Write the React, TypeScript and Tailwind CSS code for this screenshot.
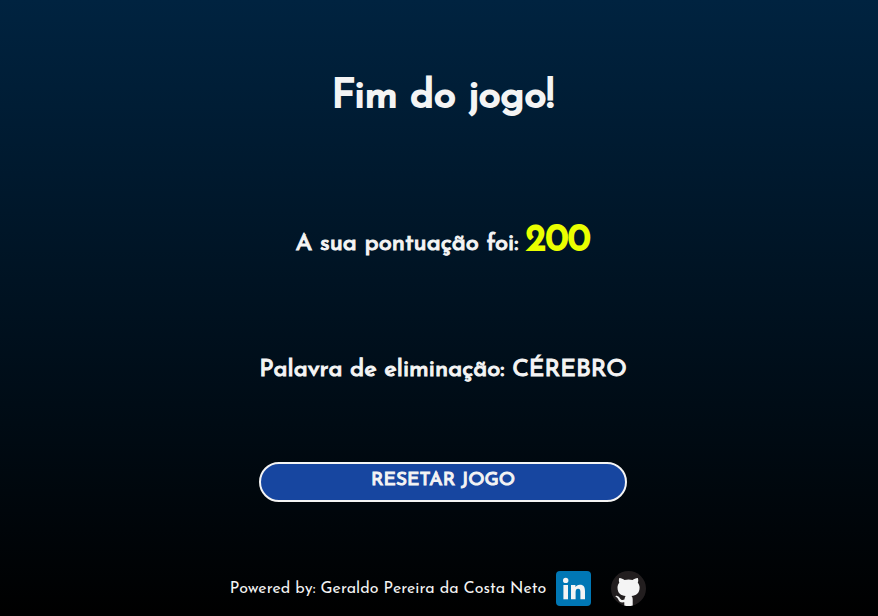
function LinkedInLogo() {
  return (
    <svg viewBox="0 0 35 35" className="size-[35px]" aria-hidden="true">
      <rect width="35" height="35" rx="4" fill="#0077b5" />
      <g fill="#f4f4f4">
        <circle cx="9.7" cy="9.4" r="2.7" />
        <path d="M7.4 14h4.6v14.3H7.4z" />
        <path d="M15 14h4.4v2c.8-1.3 2.3-2.3 4.4-2.3 4.2 0 5.2 2.6 5.2 6.6v8h-4.6v-7c0-1.800-.2-3.500-2.300-3.500s-2.500 1.700-2.500 3.500v7H15z" />
      </g>
    </svg>
  );
}

function GitHubLogo() {
  return (
    <svg viewBox="0 0 35 35" className="size-[35px]" aria-hidden="true">
      <circle cx="17.5" cy="17.5" r="17.5" fill="#221e1f" />
      <path
        fill="#f4f4f4"
        d="M13.3 34.5V31.3C9 32 8 30.3 7.3 28.5C6.7 27 5.6 26.3 4.5 25.5C4.1 25.1 4.8 24.7 5.6 24.8C7.4 25 8.5 26.6 9.2 27.7C10.3 29.3 12 29.2 13.4 28.6C13.6 27.2 14 25.9 14.6 25.1C10 24.6 6.5 22.7 6.5 16.6C6.5 14.6 7.2 13 8.3 11.7C7.7 10.2 7.7 8.5 8.3 6.9C10.2 6.8 12 7.9 13.5 8.9C16.2 8.2 18.9 8.2 21.6 8.9C23.1 7.9 24.9 6.8 26.8 6.9C27.4 8.5 27.4 10.2 26.8 11.7C27.9 13 28.6 14.6 28.6 16.6C28.6 22.7 25 24.6 20.5 25.1C21.4 25.8 21.7 27.2 21.7 28.5V34.5Q17.5 35.5 13.3 34.5Z"
      />
    </svg>
  );
}

export default function App() {
  return (
    <div className="flex min-h-screen flex-col items-center bg-linear-to-b/srgb from-[#002340] to-black font-['Josefin_Sans',Lato,sans-serif] text-[#f4f4f4]">
      <main className="flex w-full flex-col items-center pl-2 [-webkit-text-stroke:1px]">
        <h1 className="mt-[72px] text-[40px] leading-[50px] whitespace-nowrap [-webkit-text-stroke:2px]">
          Fim do jogo!
        </h1>
        <h2 className="mt-[96px] text-[24px] leading-[46px] whitespace-nowrap">
          A sua pontuação foi:{" "}
          <span className="text-[36px] text-[#eaff00] [-webkit-text-stroke:2px]">200</span>
        </h2>
        <h2 className="mt-[88px] text-[24px] leading-[30px] whitespace-nowrap">
          Palavra de eliminação: CÉREBRO
        </h2>
        <button
          type="button"
          className="mt-[77px] h-[40px] w-full max-w-[368px] rounded-full border-2 border-[#f4f4f4] bg-[#1746a0] pb-[2px] text-[19px] leading-[24px]"
        >
          RESETAR JOGO
        </button>
      </main>
      <footer className="mt-[69px] flex items-center pr-[2px] text-[16px] leading-[24px]">
        <p className="whitespace-nowrap">Powered by: Geraldo Pereira da Costa Neto</p>
        <a href="#linkedin" aria-label="LinkedIn" className="ml-[10px]">
          <LinkedInLogo />
        </a>
        <a href="#github" aria-label="GitHub" className="ml-[20px]">
          <GitHubLogo />
        </a>
      </footer>
    </div>
  );
}
